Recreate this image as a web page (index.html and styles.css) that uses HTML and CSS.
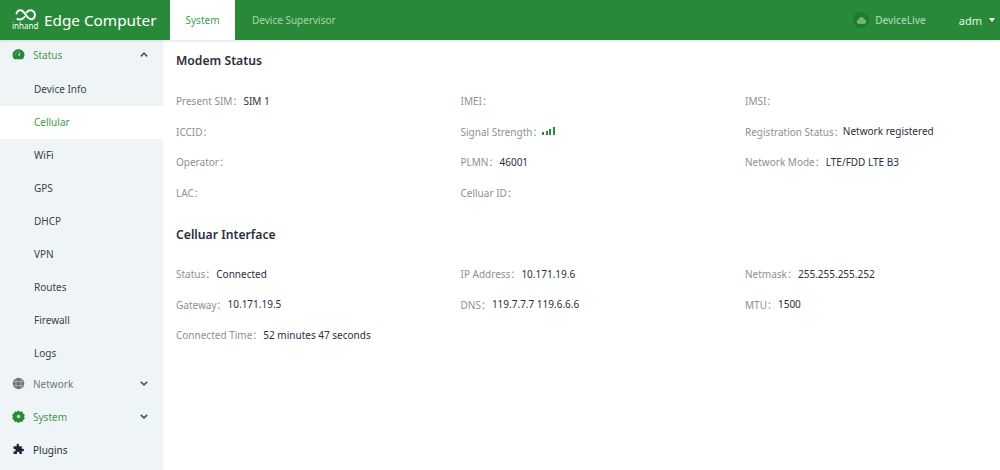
FILE: index.html
```html
<!DOCTYPE html>
<html lang="en">
<head>
<meta charset="utf-8">
<title>Edge Computer</title>
<link rel="stylesheet" href="styles.css">
</head>
<body>
<header class="topbar">
  <div class="brand">
    <svg class="logo" width="28" height="24" viewBox="0 0 28 24" aria-hidden="true">
      <path class="logo-loop" d="M4.500 5.500C5 3 7 1.700 9 2.300C11.500 3 13 5.800 15 8.500C16.500 10.500 18.500 11.800 20.500 11C23 10 23.700 6.500 22 4C20 1.500 16.500 1.500 14.800 4.300M12.500 9C10.500 11.500 8 12 5.500 11"/>
      <text class="logo-word" x="0" y="21">inhand</text>
    </svg>
    <span class="brand-name">Edge Computer</span>
  </div>
  <nav class="tabs">
    <a class="tab tab-active">System</a>
    <a class="tab">Device Supervisor</a>
  </nav>
  <div class="top-right">
    <span class="cloud-badge">
      <svg width="11" height="8" viewBox="0 0 12 9" aria-hidden="true"><path d="M3 9a2.600 2.600 0 0 1-.5-5.100A3.600 3.600 0 0 1 9.300 3.400 2.900 2.900 0 0 1 9.200 9z"/></svg>
    </span>
    <span class="live">DeviceLive</span>
    <span class="user">adm</span>
    <span class="caret"></span>
  </div>
</header>
<div class="main">
  <aside class="sidebar">
    <div class="menu-head menu-head-green menu-head-first">
      <svg class="menu-icon" width="13" height="13" viewBox="0 0 13 13" aria-hidden="true"><path class="i-green" d="M6.500 1.200C3 1.200.5 3.700.5 6.800c0 1.700.7 3.200 1.900 4.400h8.200c1.200-1.200 1.900-2.700 1.900-4.400 0-3.100-2.500-5.600-6-5.600z"/><path class="i-cut" d="M6 7 8.800 4 7.200 8z"/><path class="i-tick" d="M2.500 6.500h1M6.500 3v1M3.700 3.900l.7.700"/></svg>
      <span class="menu-label">Status</span>
      <svg class="chev" width="8" height="5" viewBox="0 0 8 5" aria-hidden="true"><path d="M.8 4.300 4 1.200l3.200 3.100"/></svg>
    </div>
    <a class="sub">Device Info</a>
    <a class="sub sub-active">Cellular</a>
    <a class="sub">WiFi</a>
    <a class="sub">GPS</a>
    <a class="sub">DHCP</a>
    <a class="sub">VPN</a>
    <a class="sub">Routes</a>
    <a class="sub">Firewall</a>
    <a class="sub">Logs</a>
    <div class="menu-head menu-head-gray">
      <svg class="menu-icon" width="13" height="13" viewBox="0 0 13 13" aria-hidden="true"><circle class="i-gray" cx="6.500" cy="6.500" r="5.800"/><path class="i-lines" d="M1.500 4.500h10M1.500 8.500h10M4 1.500v10M9 1.500v10"/></svg>
      <span class="menu-label">Network</span>
      <svg class="chev" width="8" height="5" viewBox="0 0 8 5" aria-hidden="true"><path d="M.8.8 4 3.900 7.200.8"/></svg>
    </div>
    <div class="menu-head menu-head-green">
      <svg class="menu-icon" width="13" height="13" viewBox="0 0 13 13" aria-hidden="true"><path class="i-green" d="M6.500.4 8.200 1.700l2.100-.2.800 2 1.700 1.300-.7 2 .7 2-1.700 1.200-.8 2-2.100-.2-1.700 1.300-1.700-1.300-2.100.2-.8-2L.2 8.800l.7-2-.7-2 1.700-1.300.8-2 2.100.2z"/><circle class="i-hole" cx="6.500" cy="6.500" r="1.800"/></svg>
      <span class="menu-label">System</span>
      <svg class="chev chev-green" width="8" height="5" viewBox="0 0 8 5" aria-hidden="true"><path d="M.8.8 4 3.900 7.200.8"/></svg>
    </div>
    <div class="menu-head menu-head-dark">
      <svg class="menu-icon" width="13" height="13" viewBox="0 0 13 13" aria-hidden="true"><path class="i-dark" d="M4.800 1.200c1-.9 2.400-.2 2.200 1 0 .4-.2.700-.2 1h3v2.700c.4 0 .8-.3 1.200-.2 1.200.1 1.500 1.900.4 2.400-.6.300-1.100 0-1.600-.2v3H7.200c0-.5.400-.9.200-1.500-.4-1-2.200-1-2.500.1-.1.500.1.900.2 1.400H1.500V8.300c.5 0 .9.300 1.400.1 1.100-.4 1-2.200-.1-2.500-.5-.1-.9.100-1.300.200V3.200h3.300c0-.4-.3-.700-.3-1.100 0-.3.100-.7.300-.9z"/></svg>
      <span class="menu-label">Plugins</span>
    </div>
  </aside>
  <main class="content">
    <h2 class="section-title">Modem Status</h2>
    <div class="fields">
      <div class="field"><span class="k">Present SIM：</span><span class="v">SIM 1</span></div>
      <div class="field"><span class="k">IMEI：</span></div>
      <div class="field"><span class="k">IMSI：</span></div>
      <div class="field"><span class="k">ICCID：</span></div>
      <div class="field"><span class="k">Signal Strength：</span>
        <span class="bars"><i class="b1"></i><i class="b2"></i><i class="b3"></i><i class="b4"></i></span>
      </div>
      <div class="field"><span class="k">Registration Status：</span><span class="v v-tight">Network registered</span></div>
      <div class="field"><span class="k">Operator：</span></div>
      <div class="field"><span class="k">PLMN：</span><span class="v">46001</span></div>
      <div class="field"><span class="k">Network Mode：</span><span class="v">LTE/FDD LTE B3</span></div>
      <div class="field"><span class="k">LAC：</span></div>
      <div class="field"><span class="k">Celluar ID：</span></div>
    </div>
    <h2 class="section-title section-second">Celluar Interface</h2>
    <div class="fields">
      <div class="field"><span class="k">Status：</span><span class="v">Connected</span></div>
      <div class="field"><span class="k">IP Address：</span><span class="v">10.171.19.6</span></div>
      <div class="field"><span class="k">Netmask：</span><span class="v">255.255.255.252</span></div>
      <div class="field"><span class="k">Gateway：</span><span class="v">10.171.19.5</span></div>
      <div class="field"><span class="k">DNS：</span><span class="v">119.7.7.7 119.6.6.6</span></div>
      <div class="field"><span class="k">MTU：</span><span class="v">1500</span></div>
      <div class="field"><span class="k">Connected Time：</span><span class="v">52 minutes 47 seconds</span></div>
    </div>
  </main>
</div>
</body>
</html>
```
FILE: styles.css
```css
* { box-sizing: border-box; }
html, body { height: 100%; }
body {
  margin: 0;
  height: 470px;
  overflow: hidden;
  background: #fff;
  font-family: "Noto Sans", "Noto Sans CJK SC", sans-serif;
  font-size: 10px;
  color: #2a2f3c;
}
.topbar {
  height: 40px;
  background: #288a38;
  display: flex;
  align-items: stretch;
  box-shadow: 0 1px 3px rgba(0, 0, 0, .12);
  position: relative;
  z-index: 2;
}
.brand {
  width: 170px;
  display: flex;
  align-items: center;
  padding-left: 12px;
  gap: 4px;
  color: #fff;
}
.logo { flex: none; }
.logo-loop { fill: none; stroke: #fff; stroke-width: 2; stroke-linecap: round; }
.logo-word { fill: #fff; font-size: 8px; font-family: "Noto Sans", sans-serif; }
.brand-name { font-size: 15.300px; white-space: nowrap; }
.tabs { display: flex; }
.tab {
  display: flex;
  align-items: center;
  justify-content: center;
  width: 65px;
  color: #a9d3ae;
}
.tab-active { background: #fff; color: #45994f; }
.tab:not(.tab-active) { width: auto; padding: 0 17px; }
.top-right {
  margin-left: auto;
  display: flex;
  align-items: center;
  padding-right: 5px;
}
.cloud-badge {
  width: 16px;
  height: 16px;
  border-radius: 50%;
  background: #1d7b2d;
  display: flex;
  align-items: center;
  justify-content: center;
  margin-right: 6px;
}
.cloud-badge path { fill: #6fb579; }
.live { color: #a9d3ae; margin-right: 33px; font-weight: 500; }
.user { color: #e8f3ea; margin-right: 7px; font-size: 11px; }
.caret {
  border-left: 3px solid transparent;
  border-right: 3px solid transparent;
  border-top: 4px solid #fff;
}
.main { display: flex; height: 430px; }
.sidebar {
  width: 163px;
  flex: none;
  background: #eff5f6;
  display: flex;
  flex-direction: column;
}
.menu-head {
  height: 33px;
  display: flex;
  align-items: center;
  padding: 0 15px 5px 12px;
  flex: none;
}
.menu-head-first { height: 32.800px; padding-bottom: 3px; }
.menu-label { margin-left: 8px; flex: 1; }
.menu-head-green .menu-label { color: #45994f; }
.menu-head-gray .menu-label { color: #70757f; }
.menu-head-dark .menu-label { color: #2a2f3c; }
.chev path { fill: none; stroke: #555b66; stroke-width: 1.700; }
.chev-green path { stroke: #2a6f3a; }
.i-green { fill: #288a38; }
.i-cut { fill: #eff5f6; }
.i-tick { fill: none; stroke: #9ccba3; stroke-width: .8; }
.i-hole { fill: #b9dcbe; }
.i-gray { fill: #6b7280; }
.i-lines { fill: none; stroke: #c6cad0; stroke-width: .6; }
.i-dark { fill: #1f2538; }
.sub {
  height: 33px;
  flex: none;
  display: flex;
  align-items: center;
  padding-left: 34px;
  color: #3a3f4c;
}
.sub-active { background: #fff; color: #45994f; }
.content { flex: 1; padding: 12px 13px 0; }
.section-title {
  margin: 0;
  font-size: 12.200px;
  font-weight: 600;
  line-height: 17px;
  color: #2a2f3c;
}
.section-second { margin-top: 18.500px; }
.fields {
  display: grid;
  grid-template-columns: repeat(3, 284.500px);
  grid-auto-rows: 30.400px;
  margin-top: 16.700px;
}
.section-second + .fields { margin-top: 16px; }
.field { display: flex; align-items: center; white-space: nowrap; }
.k { color: #8c9098; }
.v { color: #2a2f3c; margin-left: 1px; }
.v-tight { margin-left: -1px; }
.bars { display: flex; align-items: flex-end; gap: 1.500px; height: 8px; }
.bars i { width: 2px; background: #288a38; display: block; }
.b1 { height: 3px; }
.b2 { height: 4px; }
.b3 { height: 6px; }
.b4 { height: 8px; }
```
